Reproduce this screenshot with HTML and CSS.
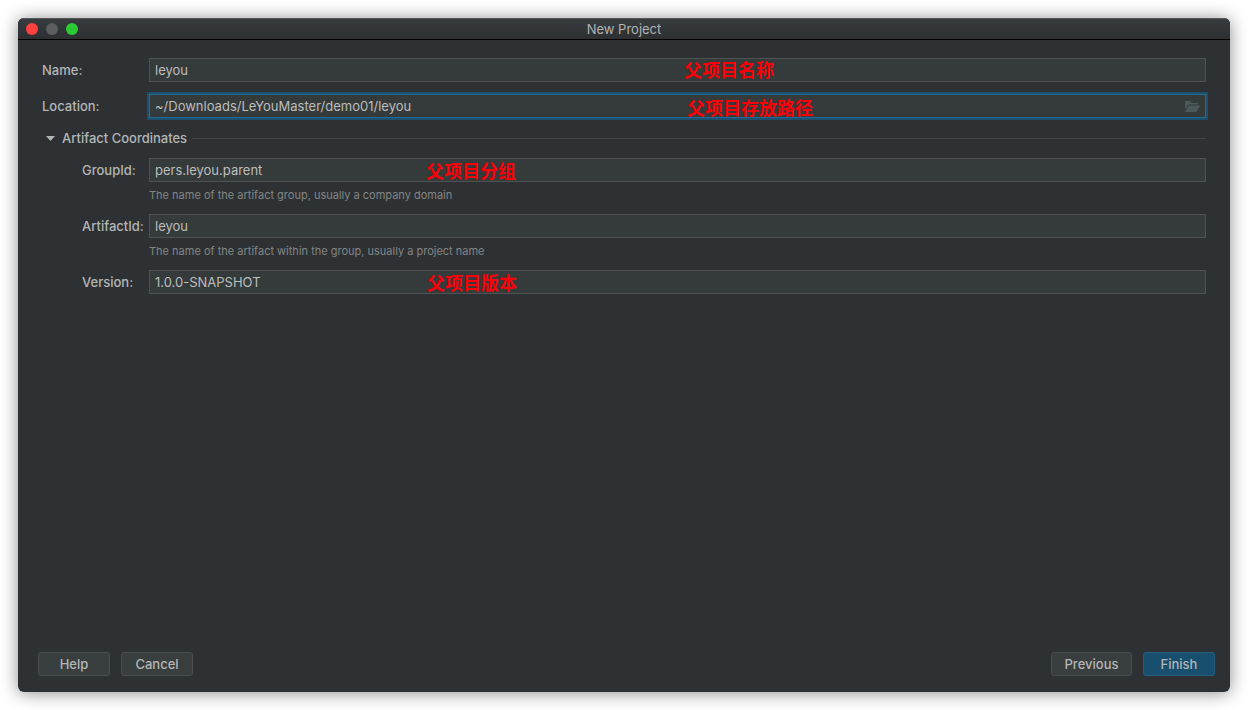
FILE: index.html
```html
<!DOCTYPE html>
<html lang="zh-CN">
<head>
<meta charset="utf-8">
<title>New Project</title>
<link rel="stylesheet" href="styles.css">
</head>
<body>
<main class="window">
  <header class="titlebar">
    <div class="lights">
      <button class="light light-close" type="button" aria-label="Close"></button>
      <button class="light light-min" type="button" aria-label="Minimize" disabled></button>
      <button class="light light-zoom" type="button" aria-label="Zoom"></button>
    </div>
    <h1 class="title">New Project</h1>
  </header>
  <form class="form">
    <div class="row">
      <label class="label" for="name">Name:</label>
      <div class="field">
        <input class="input" id="name" type="text" value="leyou">
        <span class="note note-name">父项目名称</span>
      </div>
    </div>
    <div class="row">
      <label class="label" for="location">Location:</label>
      <div class="field">
        <input class="input input-active" id="location" type="text" value="~/Downloads/LeYouMaster/demo01/leyou">
        <button class="browse" type="button" aria-label="Browse">
          <svg class="icon" width="16" height="12" viewBox="0 0 16 12" aria-hidden="true"><path d="M1 9.500V1h5l1.500 2H14v1.500H4z"/><path d="M4.500 5.500H16L12.500 12H1z"/></svg>
        </button>
        <span class="note note-location">父项目存放路径</span>
      </div>
    </div>
    <div class="section">
      <button class="toggle" type="button" aria-expanded="true">
        <svg class="arrow" width="9" height="5" viewBox="0 0 9 5" aria-hidden="true"><path d="M0 0h9L4.500 5z"/></svg>
        Artifact Coordinates
      </button>
      <span class="rule"></span>
    </div>
    <div class="row">
      <label class="label label-nested" for="group">GroupId:</label>
      <div class="field">
        <input class="input" id="group" type="text" value="pers.leyou.parent">
        <span class="note note-group">父项目分组</span>
      </div>
      <p class="hint">The name of the artifact group, usually a company domain</p>
    </div>
    <div class="row">
      <label class="label label-nested" for="artifact">ArtifactId:</label>
      <div class="field">
        <input class="input" id="artifact" type="text" value="leyou">
      </div>
      <p class="hint">The name of the artifact within the group, usually a project name</p>
    </div>
    <div class="row">
      <label class="label label-nested" for="version">Version:</label>
      <div class="field">
        <input class="input" id="version" type="text" value="1.0.0-SNAPSHOT">
        <span class="note note-version">父项目版本</span>
      </div>
    </div>
  </form>
  <footer class="footer">
    <button class="btn" type="button">Help</button>
    <button class="btn" type="button">Cancel</button>
    <span class="spacer"></span>
    <button class="btn btn-wide" type="button">Previous</button>
    <button class="btn btn-primary" type="button">Finish</button>
  </footer>
</main>
</body>
</html>
```
FILE: styles.css
```css
* { box-sizing: border-box; }

body {
  margin: 0;
  padding: 18px;
  min-height: 100vh;
  display: flex;
  background: #fff;
  color: #b4b6b6;
  font: 500 13px/16px Inter, "Noto Sans CJK SC", sans-serif;
}

button, input { font: inherit; color: inherit; margin: 0; }

.window {
  flex: 1;
  display: flex;
  flex-direction: column;
  background: #2d3133;
  border-radius: 6px;
  overflow: hidden;
  box-shadow: 0 1px 18px rgba(0, 0, 0, 0.45);
}

.titlebar {
  display: grid;
  grid-template-columns: 1fr auto 1fr;
  align-items: center;
  height: 22px;
  padding: 0 8px;
  background: linear-gradient(#383c3f, #2d2f31);
  border-top: 1px solid #54585a;
  border-bottom: 1px solid #000;
}

.lights { display: flex; gap: 8px; }

.light {
  width: 12px;
  height: 12px;
  padding: 0;
  border: 0;
  border-radius: 50%;
}

.light-close { background: #ff4141; }
.light-min { background: #5c5e61; }
.light-zoom { background: #2bcb35; }

.title {
  margin: 0;
  font-size: 13px;
  font-weight: 400;
  color: #b1b3b5;
}

.form {
  flex: 1;
  display: flex;
  flex-direction: column;
  gap: 12px;
  padding: 18px 24px;
}

.row {
  display: grid;
  grid-template-columns: 107px 1fr;
  align-items: center;
}

.row:has(.hint) { margin-bottom: -6px; }

.label-nested { padding-left: 40px; }

.field { position: relative; display: flex; }

.input {
  flex: 1;
  min-width: 0;
  height: 24px;
  padding: 0 5px;
  font-weight: 400;
  color: #bcbebe;
  background: #353a3a;
  border: 1px solid #505252;
  border-radius: 0;
  outline: 0;
}

.input-active {
  border-color: #236990;
  box-shadow: 0 0 0 2px #1c506e;
}

.browse {
  position: absolute;
  top: 0;
  right: 6px;
  display: flex;
  align-items: center;
  height: 24px;
  padding: 0;
  border: 0;
  background: none;
}

.icon { fill: #4d585b; }

.note {
  position: absolute;
  top: 0;
  font: 700 18px/24px "Noto Sans CJK SC", sans-serif;
  color: #fb0007;
  white-space: nowrap;
  pointer-events: none;
}

.note-name { left: 535px; top: -1px; }
.note-location { left: 538px; top: 1px; }
.note-group { left: 277px; }
.note-version { left: 278px; }

.section { display: flex; align-items: center; gap: 5px; }

.toggle {
  display: flex;
  align-items: center;
  gap: 7px;
  padding: 0 0 0 4px;
  border: 0;
  background: none;
}

.arrow { fill: #b4b6b6; }

.rule { flex: 1; height: 1px; background: #414546; }

.hint {
  grid-column: 2;
  margin: 0;
  font-size: 11px;
  font-weight: 400;
  line-height: 26px;
  color: #838585;
}

.footer {
  display: flex;
  gap: 11px;
  padding: 0 15px 16px 20px;
}

.spacer { flex: 1; }

.btn {
  min-width: 72px;
  height: 24px;
  padding: 0 12px;
  background: #393e3f;
  border: 1px solid #4b4e4f;
  border-radius: 3px;
}

.btn-wide { min-width: 81px; }

.btn-primary { background: #184e6e; border-color: #265f7b; }
```
